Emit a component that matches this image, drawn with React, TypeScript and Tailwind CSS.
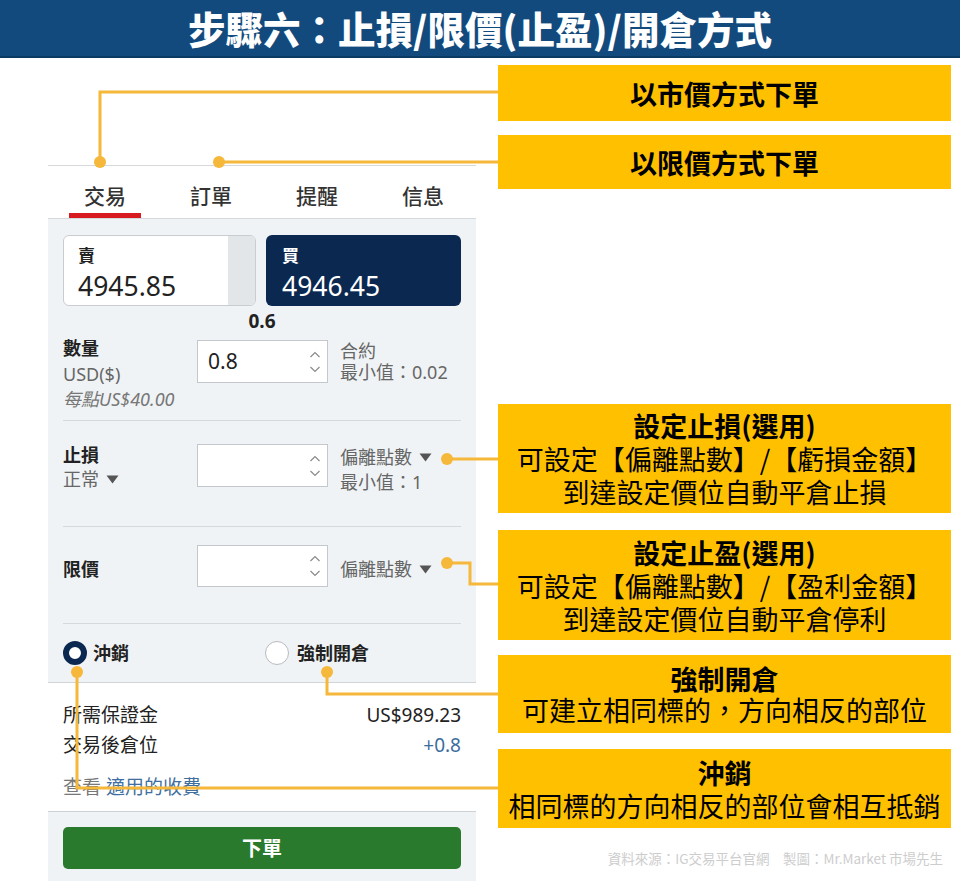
import React from 'react';

const panelFont = { fontFamily: '"Noto Sans", "Noto Sans CJK TC", sans-serif' };
const cjkFont = { fontFamily: '"Noto Sans CJK TC", "Noto Sans", sans-serif' };

const Caret = () => (
	<svg width="13" height="9" viewBox="0 0 13 9" className="ml-[7px] inline-block">
		<path d="M0.5 0.5 H12.5 L6.5 8.5 Z" fill="#555" />
	</svg>
);

const Spinner = () => (
	<svg width="12" height="26" viewBox="0 0 12 26" className="absolute right-[6px] top-1/2 -translate-y-1/2">
		<path d="M1.5 8 L6 3.5 L10.5 8" stroke="#8a8a8a" strokeWidth="1.2" fill="none" />
		<path d="M1.5 18 L6 22.5 L10.5 18" stroke="#8a8a8a" strokeWidth="1.2" fill="none" />
	</svg>
);

const NumberInput = ({ value, className }: { value?: string; className: string }) => (
	<div
		className={`relative h-[43px] w-[131px] shrink-0 border border-[#c4c7cb] bg-white pl-[10px] text-[21px] leading-[41px] text-[#222] ${className}`}
	>
		{value}
		<Spinner />
	</div>
);

const Callout = ({
	title,
	lines = [],
	className,
	leading = 'leading-[33px]',
}: {
	title: string;
	lines?: string[];
	className: string;
	leading?: string;
}) => (
	<div
		className={`flex w-[453px] flex-col items-center justify-center bg-[#ffc000] text-[27px] text-black ${leading} ${className}`}
		style={cjkFont}
	>
		<p className="font-bold">{title}</p>
		{lines.map((line) => (
			<p key={line} className="whitespace-nowrap">
				{line}
			</p>
		))}
	</div>
);

const tabs = ['交易', '訂單', '提醒', '信息'];

const TradePanel = () => (
	<div className="ml-[48px] mt-[107px] w-[428px] border-t border-[#d6d9dc]" style={panelFont}>
		<div className="flex h-[53px] border-b border-[#d6d9dc] pl-[4px]">
			{tabs.map((tab, index) => (
				<div key={tab} className="flex flex-1 flex-col items-center justify-end">
					<p className="text-[21px] font-medium leading-[28px] text-[#333]" style={cjkFont}>
						{tab}
					</p>
					<div className={`mt-[4px] h-[5px] w-[72px] ${index === 0 ? 'bg-[#d71920]' : ''}`} />
				</div>
			))}
		</div>

		<div className="border-b border-[#d3d6d9] bg-[#f0f3f5] px-[15px] pt-[16px]">
			<div className="flex gap-[10px]">
				<div className="flex h-[71px] w-[193px] overflow-hidden rounded-[6px] border border-[#c9ccd0] bg-white">
					<div className="flex-1 pl-[14px] pt-[8px]">
						<p className="text-[17px] font-bold leading-[22px] text-[#222]" style={cjkFont}>
							賣
						</p>
						<p className="mt-[3px] text-[26.5px] leading-[34px] text-[#222]">4945.85</p>
					</div>
					<div className="w-[27px] bg-[#e3e6e9]" />
				</div>
				<div className="h-[71px] w-[195px] rounded-[6px] bg-[#0b2850] pl-[16px] pt-[9px] text-white">
					<p className="text-[17px] font-bold leading-[22px]" style={cjkFont}>
						買
					</p>
					<p className="mt-[3px] text-[26.5px] leading-[34px]">4946.45</p>
				</div>
			</div>

			<p className="h-[30px] text-center text-[19px] font-bold leading-[30px] text-[#222]">0.6</p>

			<div className="flex h-[85px] items-start border-b border-[#d6d9dc]">
				<div className="w-[134px] text-[18px] leading-[25.5px]">
					<p className="font-bold text-[#222]">數量</p>
					<p className="text-[#666]">USD($)</p>
					<p className="whitespace-nowrap italic text-[#777]">每點US$40.00</p>
				</div>
				<NumberInput value="0.8" className="mt-[4px]" />
				<div className="ml-[12px] mt-[5px] text-[18px] leading-[21px] text-[#666]">
					<p>合約</p>
					<p>最小值：0.02</p>
				</div>
			</div>

			<div className="flex h-[106px] items-start border-b border-[#d6d9dc]">
				<div className="mt-[22px] w-[134px] text-[18px] leading-[24px]">
					<p className="font-bold text-[#222]">止損</p>
					<p className="flex items-center text-[#666]">
						正常
						<Caret />
					</p>
				</div>
				<NumberInput className="mt-[23px]" />
				<div className="ml-[12px] mt-[24px] text-[18px] leading-[25px] text-[#666]">
					<p className="flex items-center">
						偏離點數
						<Caret />
					</p>
					<p>最小值：1</p>
				</div>
			</div>

			<div className="flex h-[97px] items-start border-b border-[#d6d9dc]">
				<div className="mt-[30px] w-[134px] text-[18px] leading-[24px]">
					<p className="font-bold text-[#222]">限價</p>
				</div>
				<div className="mt-[18px] h-[42px]">
					<NumberInput className="!h-[42px]" />
				</div>
				<div className="ml-[12px] mt-[30px] text-[18px] leading-[24px] text-[#666]">
					<p className="flex items-center">
						偏離點數
						<Caret />
					</p>
				</div>
			</div>

			<div className="flex h-[58px] items-center">
				<div className="flex w-[202px] items-center">
					<div className="h-[24px] w-[24px] rounded-full border-[6px] border-[#0b2850] bg-white" />
					<span className="ml-[6px] text-[18px] font-bold text-[#222]">沖銷</span>
				</div>
				<div className="flex items-center">
					<div className="h-[24px] w-[24px] rounded-full border border-[#b8bbbf] bg-white" />
					<span className="ml-[8px] text-[18px] font-bold text-[#222]">強制開倉</span>
				</div>
			</div>
		</div>

		<div className="border-b border-[#cfd2d5] bg-white px-[15px] pb-[9px] pt-[17px] text-[19px] leading-[30px]">
			<div className="flex justify-between text-[#222]">
				<span>所需保證金</span>
				<span>US$989.23</span>
			</div>
			<div className="flex justify-between">
				<span className="text-[#222]">交易後倉位</span>
				<span className="text-[#3a6d9c]">+0.8</span>
			</div>
			<p className="mt-[12px]">
				<span className="text-[#777]">查看 </span>
				<span className="text-[#3f6f9e]">適用的收費</span>
			</p>
		</div>

		<div className="bg-[#f0f3f5] px-[15px] pb-[12px] pt-[15px]">
			<div
				className="flex h-[42px] items-center justify-center rounded-[5px] bg-[#2a7a2e] text-[20px] font-bold text-white"
				style={cjkFont}
			>
				下單
			</div>
		</div>
	</div>
);

const Connectors = () => {
	const paths = [
		'M498 92 H100 V162',
		'M498 162 H219',
		'M498 459 H447',
		'M498 584 H470 V563 H447',
		'M498 694 H327 V672',
		'M498 788 H77 V672',
	];
	const dots = [
		[100, 162],
		[219, 162],
		[447, 459],
		[447, 563],
		[327, 672],
		[77, 672],
	];
	return (
		<svg className="pointer-events-none absolute left-0 top-0" width="960" height="892" viewBox="0 0 960 892">
			{paths.map((d) => (
				<path key={d} d={d} stroke="#f5b83a" strokeWidth="3" fill="none" />
			))}
			{dots.map(([cx, cy]) => (
				<circle key={`${cx}-${cy}`} cx={cx} cy={cy} r="6" fill="#f5b83a" />
			))}
		</svg>
	);
};

export default function App() {
	return (
		<div className="relative h-[892px] w-[960px] overflow-hidden bg-white">
			<header
				className="flex h-[58px] items-center justify-center border-b-2 border-[#0b3a63] bg-[#124a7d] text-[37.5px] font-black leading-[56px] text-white"
				style={cjkFont}
			>
				步驟六：止損/限價(止盈)/開倉方式
			</header>

			<div className="flex">
				<TradePanel />

				<div className="ml-[22px] flex flex-col">
					<Callout title="以市價方式下單" className="mt-[7px] h-[56px]" />
					<Callout title="以限價方式下單" className="mt-[14px] h-[54px]" />
					<Callout
						title="設定止損(選用)"
						lines={['可設定【偏離點數】/【虧損金額】', '到達設定價位自動平倉止損']}
						className="mt-[215px] h-[109px]"
					/>
					<Callout
						title="設定止盈(選用)"
						lines={['可設定【偏離點數】/【盈利金額】', '到達設定價位自動平倉停利']}
						className="mt-[17px] h-[110px]"
					/>
					<Callout
						title="強制開倉"
						lines={['可建立相同標的，方向相反的部位']}
						leading="leading-[31px]"
						className="mt-[15px] h-[78px]"
					/>
					<Callout
						title="沖銷"
						lines={['相同標的方向相反的部位會相互抵銷']}
						className="mt-[16px] h-[79px]"
					/>
					<p className="mt-[22px] pr-[8px] text-right text-[13.5px] leading-[16px] text-[#cdcdcd]" style={cjkFont}>
						資料來源：IG交易平台官網　製圖：Mr.Market 市場先生
					</p>
				</div>
			</div>

			<Connectors />
		</div>
	);
}
